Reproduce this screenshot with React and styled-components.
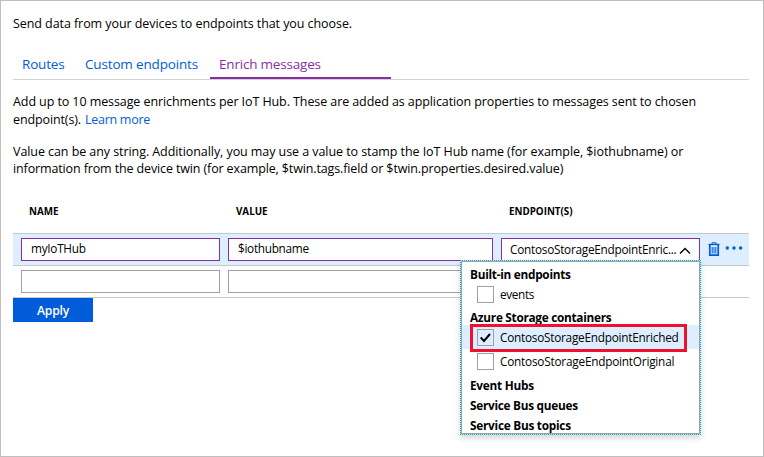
import React from 'react';
import styled, { createGlobalStyle } from 'styled-components';

const GlobalStyle = createGlobalStyle`
  * { box-sizing: border-box; }
  body { margin: 0; background: #fff; }
`;

const Page = styled.main`
  width: 764px;
  height: 457px;
  padding: 14px 14px 0 12px;
  border: 1px solid #bfbfbf;
  background: #fff;
  color: #000;
  font-family: 'Open Sans', 'Noto Sans', sans-serif;
  font-size: 12.5px;
  line-height: 18px;
  overflow: hidden;
`;

const Text = styled.span`
  display: inline-block;
  white-space: pre;
  letter-spacing: ${(p) => p.$track || 0}px;
`;

const Intro = styled.p`
  margin: 0;
  height: 37px;
`;

const Tabs = styled.nav`
  display: flex;
  height: 28px;
  border-bottom: 1px solid #d2d2d2;
`;

const Tab = styled.button`
  width: ${(p) => p.$width}px;
  height: 27px;
  padding: 0 9px 1px;
  border: 0;
  border-bottom: 2px solid ${(p) => (p.$active ? '#8a2da5' : 'transparent')};
  background: none;
  color: ${(p) => (p.$active ? '#8a2da5' : '#015cda')};
  font: 13.5px/22px 'Open Sans', 'Noto Sans', sans-serif;
  text-align: left;
`;

const Paragraph = styled.p`
  margin: 0;
  padding-top: ${(p) => p.$gap}px;
`;

const Line = styled.span`
  display: flex;
  gap: 4px;
  height: ${(p) => p.$height || 17}px;
`;

const Link = styled.a`
  color: #015cda;
`;

const columns = '207px 273px 199px';

const TableHead = styled.div`
  display: grid;
  grid-template-columns: ${columns};
  height: 57px;
  padding: 28px 0 0 16px;
  border-bottom: 1px solid #c8c8c8;
  font-size: 9.8px;
  font-weight: 700;
  line-height: 14px;
`;

const Row = styled.div`
  display: grid;
  grid-template-columns: ${columns} 1fr;
  height: 32px;
  padding: 4px 0 0 8px;
  border-bottom: 1px solid #c8c8c8;
  background: ${(p) => (p.$active ? '#dceeff' : '#fff')};
`;

const Field = styled.div`
  width: ${(p) => p.$width}px;
  height: 23px;
  padding: ${(p) => p.$padTop || 1}px 8px 0 ${(p) => p.$padLeft || 9}px;
  border: 1px solid ${(p) => (p.$active ? '#8a2da5' : '#a0a0a0')};
  background: #fff;
  font-size: 11.8px;
  line-height: 17px;
`;

const Select = styled(Field)`
  position: relative;
  display: flex;
  justify-content: space-between;
`;

const Chevron = styled.svg`
  flex: none;
  width: 12px;
  height: 8px;
  margin-top: 6px;
`;

const Actions = styled.div`
  display: flex;
  align-items: flex-start;
  gap: 5px;
  padding: 4px 0 0 8px;
`;

const Menu = styled.div`
  position: absolute;
  z-index: 2;
  top: 21px;
  left: -42px;
  width: 241px;
  height: 175px;
  border: 1px dotted #00aeea;
  background: #c4e6f3;
  box-shadow: 0 3px 6px rgba(0, 0, 0, 0.16);
`;

const MenuBody = styled.div`
  height: 173px;
  padding-top: 3px;
  border: 1px solid #a0a0a0;
  background: #fff;
  overflow: hidden;
`;

const GroupTitle = styled.div`
  height: ${(p) => p.$height}px;
  padding: ${(p) => p.$padTop}px 0 0 8px;
  font-weight: 700;
  font-size: 11.8px;
  line-height: 18px;
`;

const Option = styled.div`
  display: flex;
  gap: 6px;
  height: 24px;
  padding: 4px 0 0 15px;
  background: ${(p) => (p.$checked ? '#dceeff' : 'transparent')};
  line-height: 16px;
`;

const CheckBox = styled.span`
  flex: none;
  display: grid;
  place-items: center;
  width: 17px;
  height: 17px;
  border: 1px solid #a0a0a0;
`;

const Highlight = styled.div`
  position: absolute;
  top: 63px;
  left: 9px;
  width: 217px;
  height: 28px;
  border: 3px solid #f0112f;
`;

const Apply = styled.button`
  display: block;
  width: 80px;
  height: 24px;
  padding: 0;
  border: 0;
  background: #015cda;
  color: #fff;
  font: 600 12.2px/26px 'Open Sans', 'Noto Sans', sans-serif;
  text-align: center;
`;

function TrashIcon() {
  return (
    <svg width="12" height="15" viewBox="0 0 12 15" fill="none" stroke="#015cda">
      <path d="M0.5 2.5H11.5" strokeWidth="1.4" />
      <path d="M4 2V0.8H8V2" />
      <path d="M1.8 3V13.2H10.2V3" strokeWidth="1.7" />
      <path d="M4.2 5V11.5M6 5V11.5M7.8 5V11.5" />
    </svg>
  );
}

function MoreIcon() {
  return (
    <svg width="18" height="13" viewBox="0 0 18 13" fill="#015cda">
      <circle cx="2.3" cy="6" r="1.7" />
      <circle cx="9" cy="6" r="1.7" />
      <circle cx="15.6" cy="6" r="1.7" />
    </svg>
  );
}

function Check() {
  return (
    <svg width="13" height="11" viewBox="0 0 13 11" fill="none" stroke="#000" strokeWidth="2">
      <path d="M1.7 5.5L5 9L11 2" />
    </svg>
  );
}

function EndpointMenu() {
  return (
    <Menu>
      <MenuBody>
        <GroupTitle $height={17} $padTop={0}><Text $track={-0.27}>Built-in endpoints</Text></GroupTitle>
        <Option>
          <CheckBox />
          <Text $track={-0.35}>events</Text>
        </Option>
        <GroupTitle $height={19} $padTop={2}><Text $track={-0.28}>Azure Storage containers</Text></GroupTitle>
        <Option $checked>
          <CheckBox><Check /></CheckBox>
          <Text $track={-0.25}>ContosoStorageEndpointEnriched</Text>
        </Option>
        <Option>
          <CheckBox />
          <Text $track={-0.22}>ContosoStorageEndpointOriginal</Text>
        </Option>
        <GroupTitle $height={20} $padTop={3}><Text $track={-0.25}>Event Hubs</Text></GroupTitle>
        <GroupTitle $height={20} $padTop={3}><Text $track={-0.27}>Service Bus queues</Text></GroupTitle>
        <GroupTitle $height={20} $padTop={3}><Text $track={-0.25}>Service Bus topics</Text></GroupTitle>
      </MenuBody>
      <Highlight />
    </Menu>
  );
}

export default function App() {
  return (
    <Page>
      <GlobalStyle />
      <Intro><Text $track={-0.07}>Send data from your devices to endpoints that you choose.</Text></Intro>
      <Tabs>
        <Tab $width={63}><Text $track={-0.2}>Routes</Text></Tab>
        <Tab $width={134}><Text $track={-0.16}>Custom endpoints</Text></Tab>
        <Tab $width={181} $active><Text $track={-0.2}>Enrich messages</Text></Tab>
      </Tabs>
      <Paragraph $gap={13}>
        <Line $height={18}><Text $track={-0.087}>Add up to 10 message enrichments per IoT Hub. These are added as application properties to messages sent to chosen</Text></Line>
        <Line>
          <Text $track={-0.12}>endpoint(s).</Text>
          <Link><Text $track={-0.27}>Learn more</Text></Link>
        </Line>
      </Paragraph>
      <Paragraph $gap={15}>
        <Line><Text $track={-0.07}>Value can be any string. Additionally, you may use a value to stamp the IoT Hub name (for example, $iothubname) or</Text></Line>
        <Line><Text $track={-0.13}>information from the device twin (for example, $twin.tags.field or $twin.properties.desired.value)</Text></Line>
      </Paragraph>
      <TableHead>
        <Text>NAME</Text>
        <Text>VALUE</Text>
        <Text>ENDPOINT(S)</Text>
      </TableHead>
      <Row $active>
        <Field $active $width={199}><Text $track={-0.27}>myIoTHub</Text></Field>
        <Field $active $width={265}><Text $track={-0.3}>$iothubname</Text></Field>
        <Select $active $width={199} $padTop={2} $padLeft={8}>
          <Text $track={-0.26}>ContosoStorageEndpointEnric...</Text>
          <Chevron viewBox="0 0 12 8" fill="none" stroke="#000" strokeWidth="1.4">
            <path d="M1 6.5L6 1.5L11 6.5" />
          </Chevron>
          <EndpointMenu />
        </Select>
        <Actions>
          <TrashIcon />
          <MoreIcon />
        </Actions>
      </Row>
      <Row>
        <Field $width={199} />
        <Field $width={265} />
        <Field $width={199} />
      </Row>
      <Apply><Text $track={-0.2}>Apply</Text></Apply>
    </Page>
  );
}
